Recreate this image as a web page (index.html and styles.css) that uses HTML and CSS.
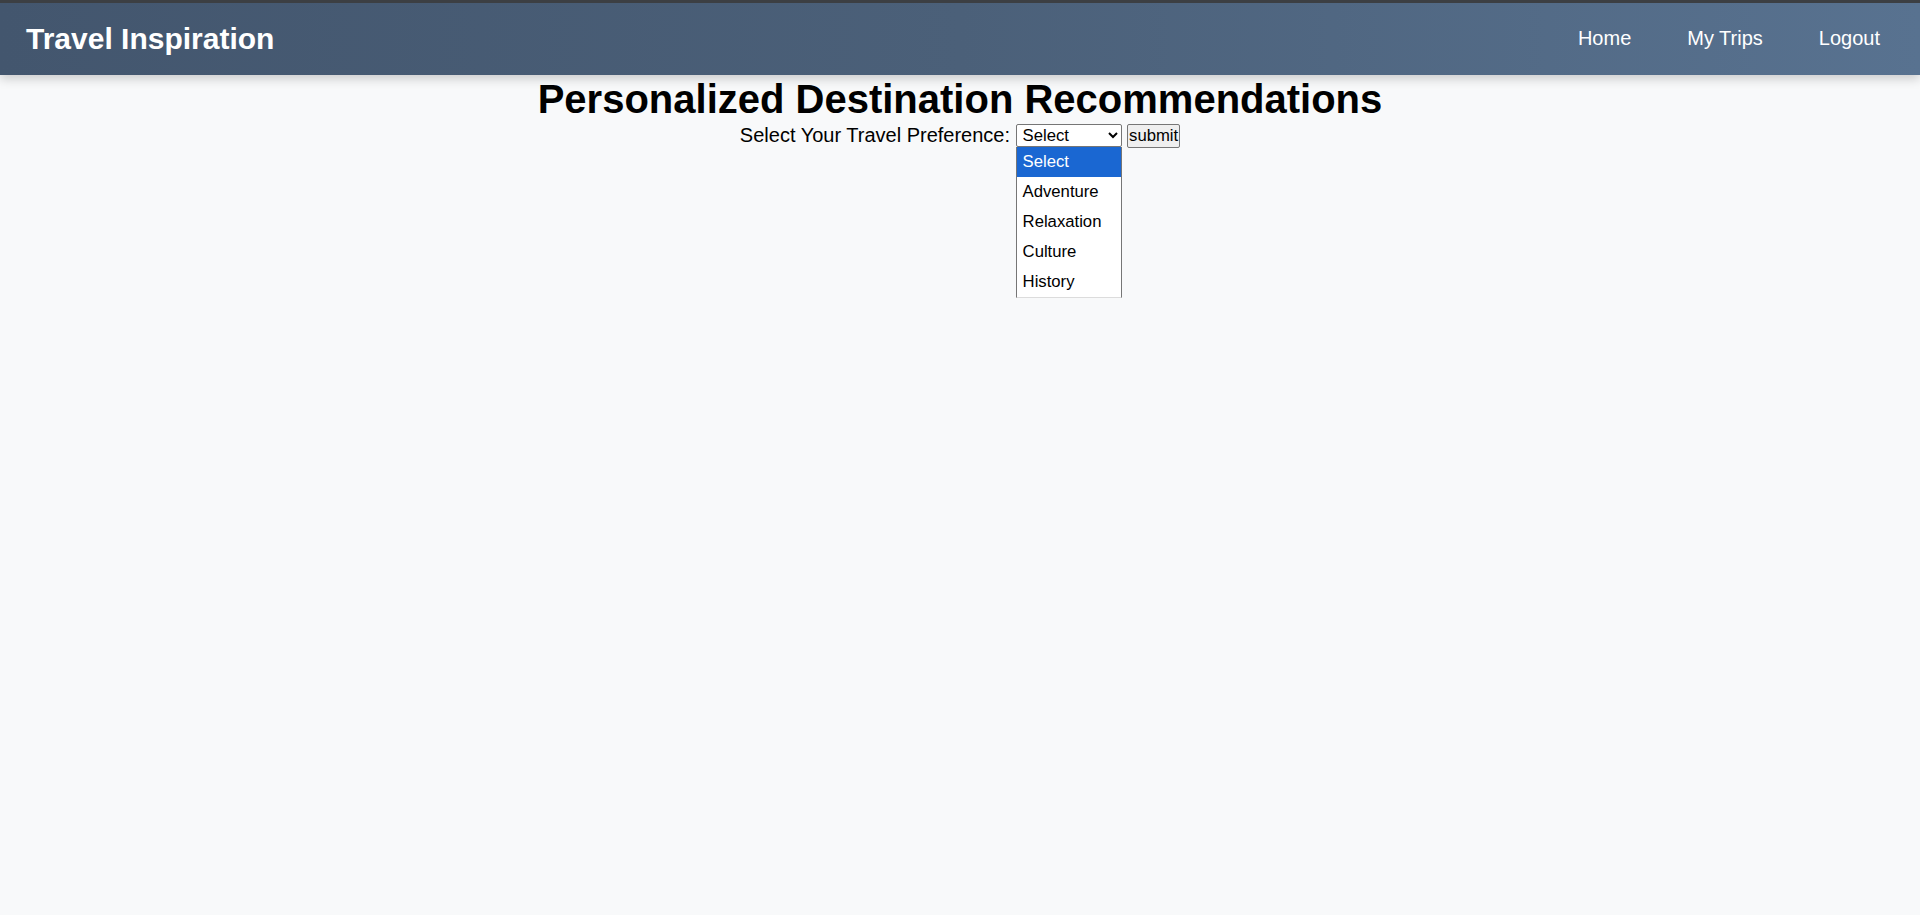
FILE: index.html
```html
<!DOCTYPE html>
<html lang="en">
<head>
<meta charset="utf-8">
<title>Travel Inspiration</title>
<link rel="stylesheet" href="styles.css">
</head>
<body>
<header class="topbar">
  <div class="brand">Travel Inspiration</div>
  <nav class="nav">
    <a class="nav-link" href="#">Home</a>
    <a class="nav-link" href="#">My Trips</a>
    <a class="nav-link" href="#">Logout</a>
  </nav>
</header>
<main class="content">
  <h1 class="title">Personalized Destination Recommendations</h1>
  <form class="pref-form">
    <label class="pref-label" for="pref">Select Your Travel Preference:</label>
    <span class="select-wrap"><select id="pref" class="pref-select">
      <option>Select</option>
      <option>Adventure</option>
      <option>Relaxation</option>
      <option>Culture</option>
      <option>History</option>
    </select><ul class="dropdown">
      <li class="dropdown-item is-active">Select</li>
      <li class="dropdown-item">Adventure</li>
      <li class="dropdown-item">Relaxation</li>
      <li class="dropdown-item">Culture</li>
      <li class="dropdown-item">History</li>
    </ul></span>
    <button type="button" class="submit-btn">submit</button>
  </form>
</main>
</body>
</html>
```
FILE: styles.css
```css
html, body {
  margin: 0;
  padding: 0;
}
body {
  background: #f8f9fa;
  font-family: "Liberation Sans", Arial, sans-serif;
  color: #000;
  min-height: 915px;
}
.topbar {
  border-top: 3px solid #3c3f43;
  height: 72px;
  display: flex;
  align-items: center;
  justify-content: space-between;
  padding: 0 40px 0 26px;
  background: linear-gradient(90deg, #43566e 0%, #4b6079 50%, #587290 100%);
  box-shadow: 0 4px 10px rgba(0, 0, 0, 0.18);
  position: relative;
  z-index: 1;
}
.brand {
  color: #fff;
  font-weight: bold;
  font-size: 30px;
  margin-top: -1px;
}
.nav {
  display: flex;
  gap: 56px;
  margin-top: -2px;
}
.nav-link {
  color: #fff;
  text-decoration: none;
  font-size: 20px;
}
.content {
  text-align: center;
}
.title {
  margin: 0;
  font-size: 40px;
  font-weight: bold;
  line-height: 46px;
  padding-top: 1px;
}
.pref-form {
  margin: 0;
  font-size: 20px;
  line-height: 23px;
  padding-top: 2px;
}
.pref-label {
  font-size: 20px;
}
.select-wrap {
  position: relative;
  display: inline-block;
  vertical-align: top;
}
.pref-select {
  width: 106px;
  height: 23px;
  font-family: "Liberation Sans", Arial, sans-serif;
  font-size: 16.7px;
  border: 1px solid #767676;
  border-radius: 2px;
  background: #fff;
  color: #000;
  padding: 0 0 0 2px;
  margin: 0;
  vertical-align: top;
}
.dropdown {
  position: absolute;
  left: 0;
  top: 23px;
  width: 106px;
  box-sizing: border-box;
  margin: 0;
  padding: 0;
  list-style: none;
  background: #fff;
  border-left: 1px solid #767676;
  border-right: 1px solid #767676;
  border-bottom: 1px solid #dcdcdc;
  text-align: left;
  z-index: 5;
}
.dropdown-item {
  height: 30px;
  line-height: 30px;
  padding-left: 6px;
  font-size: 16.7px;
  color: #000;
}
.dropdown-item.is-active {
  background: #1a67d2;
  color: #fff;
}
.submit-btn {
  height: 24px;
  width: 53px;
  padding: 0;
  margin: 0;
  font-family: "Liberation Sans", Arial, sans-serif;
  font-size: 16.7px;
  background: #efefef;
  border: 1px solid #767676;
  border-radius: 2px;
  color: #000;
  vertical-align: top;
}
```
